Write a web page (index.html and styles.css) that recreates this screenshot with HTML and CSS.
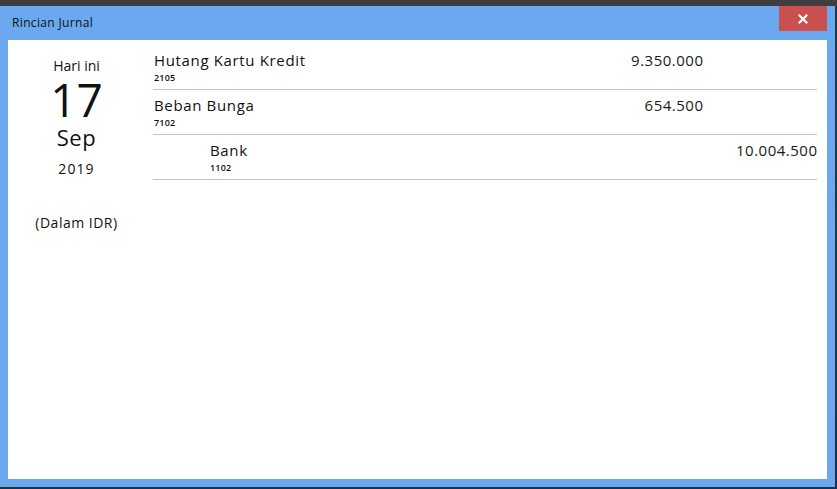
FILE: index.html
```html
<!DOCTYPE html>
<html>
<head>
<meta charset="utf-8">
<link rel="stylesheet" href="styles.css">
</head>
<body>
<div class="window">
  <div class="titlebar">
    <span class="title">Rincian Jurnal</span>
    <button class="close" aria-label="Tutup">
      <svg width="10" height="10" viewBox="0 0 10 10"><path d="M1.5 1.5 L8.5 8.5 M8.5 1.5 L1.5 8.5" stroke="#fff" stroke-width="2.2" stroke-linecap="square"/></svg>
    </button>
  </div>
  <div class="content">
    <div class="datecol">
      <div class="today">Hari ini</div>
      <div class="day">17</div>
      <div class="month">Sep</div>
      <div class="year">2019</div>
      <div class="currency">(Dalam IDR)</div>
    </div>
    <div class="journal">
      <div class="row">
        <div class="acct">
          <div class="name">Hutang Kartu Kredit</div>
          <div class="code">2105</div>
        </div>
        <div class="amt">9.350.000</div>
        <div class="amt"></div>
      </div>
      <div class="row">
        <div class="acct">
          <div class="name">Beban Bunga</div>
          <div class="code">7102</div>
        </div>
        <div class="amt">654.500</div>
        <div class="amt"></div>
      </div>
      <div class="row">
        <div class="acct credit">
          <div class="name">Bank</div>
          <div class="code">1102</div>
        </div>
        <div class="amt"></div>
        <div class="amt">10.004.500</div>
      </div>
    </div>
  </div>
</div>
</body>
</html>
```
FILE: styles.css
```css
html, body {
  margin: 0;
  padding: 0;
}
body {
  width: 837px;
  height: 489px;
  background: linear-gradient(to bottom, #3e3e3e 0, #3e3e3e 6px, #2a3644 6px, #1f3249 100%);
  font-family: "Open Sans", "Noto Sans", sans-serif;
  color: #111;
  overflow: hidden;
  padding-top: 6px;
  box-sizing: border-box;
}
.window {
  width: 835px;
  height: 481px;
  background: #6aa8ef;
  display: flex;
  flex-direction: column;
}
.titlebar {
  height: 34px;
  display: flex;
  align-items: flex-start;
  justify-content: space-between;
  flex: none;
}
.title {
  font-size: 12px;
  line-height: 16px;
  letter-spacing: 0.35px;
  padding: 9px 0 0 12px;
  color: #111;
}
.close {
  width: 48px;
  height: 25px;
  margin: 0 8px 0 0;
  padding: 0;
  border: none;
  background: #c9504f;
  display: flex;
  align-items: center;
  justify-content: center;
}
.content {
  flex: 1;
  margin: 0 8px 8px 8px;
  background: #fff;
  display: grid;
  grid-template-columns: 137px 1fr;
  column-gap: 8px;
  padding: 5px 10px 0 0;
  align-items: start;
}
.datecol {
  display: flex;
  flex-direction: column;
  align-items: center;
  color: #111;
}
.today {
  font-size: 14px;
  line-height: 18px;
  margin-top: 12px;
}
.day {
  font-size: 46px;
  line-height: 47px;
  margin-top: 1px;
}
.month {
  font-size: 22px;
  line-height: 26px;
  letter-spacing: 0.5px;
  margin-top: 1px;
}
.year {
  font-size: 14px;
  line-height: 18px;
  letter-spacing: 1.1px;
  margin-top: 10px;
}
.currency {
  font-size: 14px;
  line-height: 18px;
  letter-spacing: 0.5px;
  margin-top: 36px;
}
.journal {
  display: flex;
  flex-direction: column;
}
.row {
  height: 44px;
  border-bottom: 1px solid #c4c4c4;
  display: grid;
  grid-template-columns: 1fr 150px 114px;
  align-items: start;
}
.acct {
  padding-top: 5px;
  padding-left: 1px;
}
.acct.credit {
  padding-left: 57px;
}
.name {
  font-size: 15px;
  line-height: 20px;
  letter-spacing: 0.65px;
}
.code {
  font-size: 9px;
  line-height: 11px;
  font-weight: 600;
  letter-spacing: 0.2px;
  margin-top: 2px;
}
.amt {
  padding-top: 5px;
  font-size: 15px;
  line-height: 20px;
  letter-spacing: 0.5px;
  margin-right: -0.5px;
  text-align: right;
  color: #1a1a1a;
}
```
